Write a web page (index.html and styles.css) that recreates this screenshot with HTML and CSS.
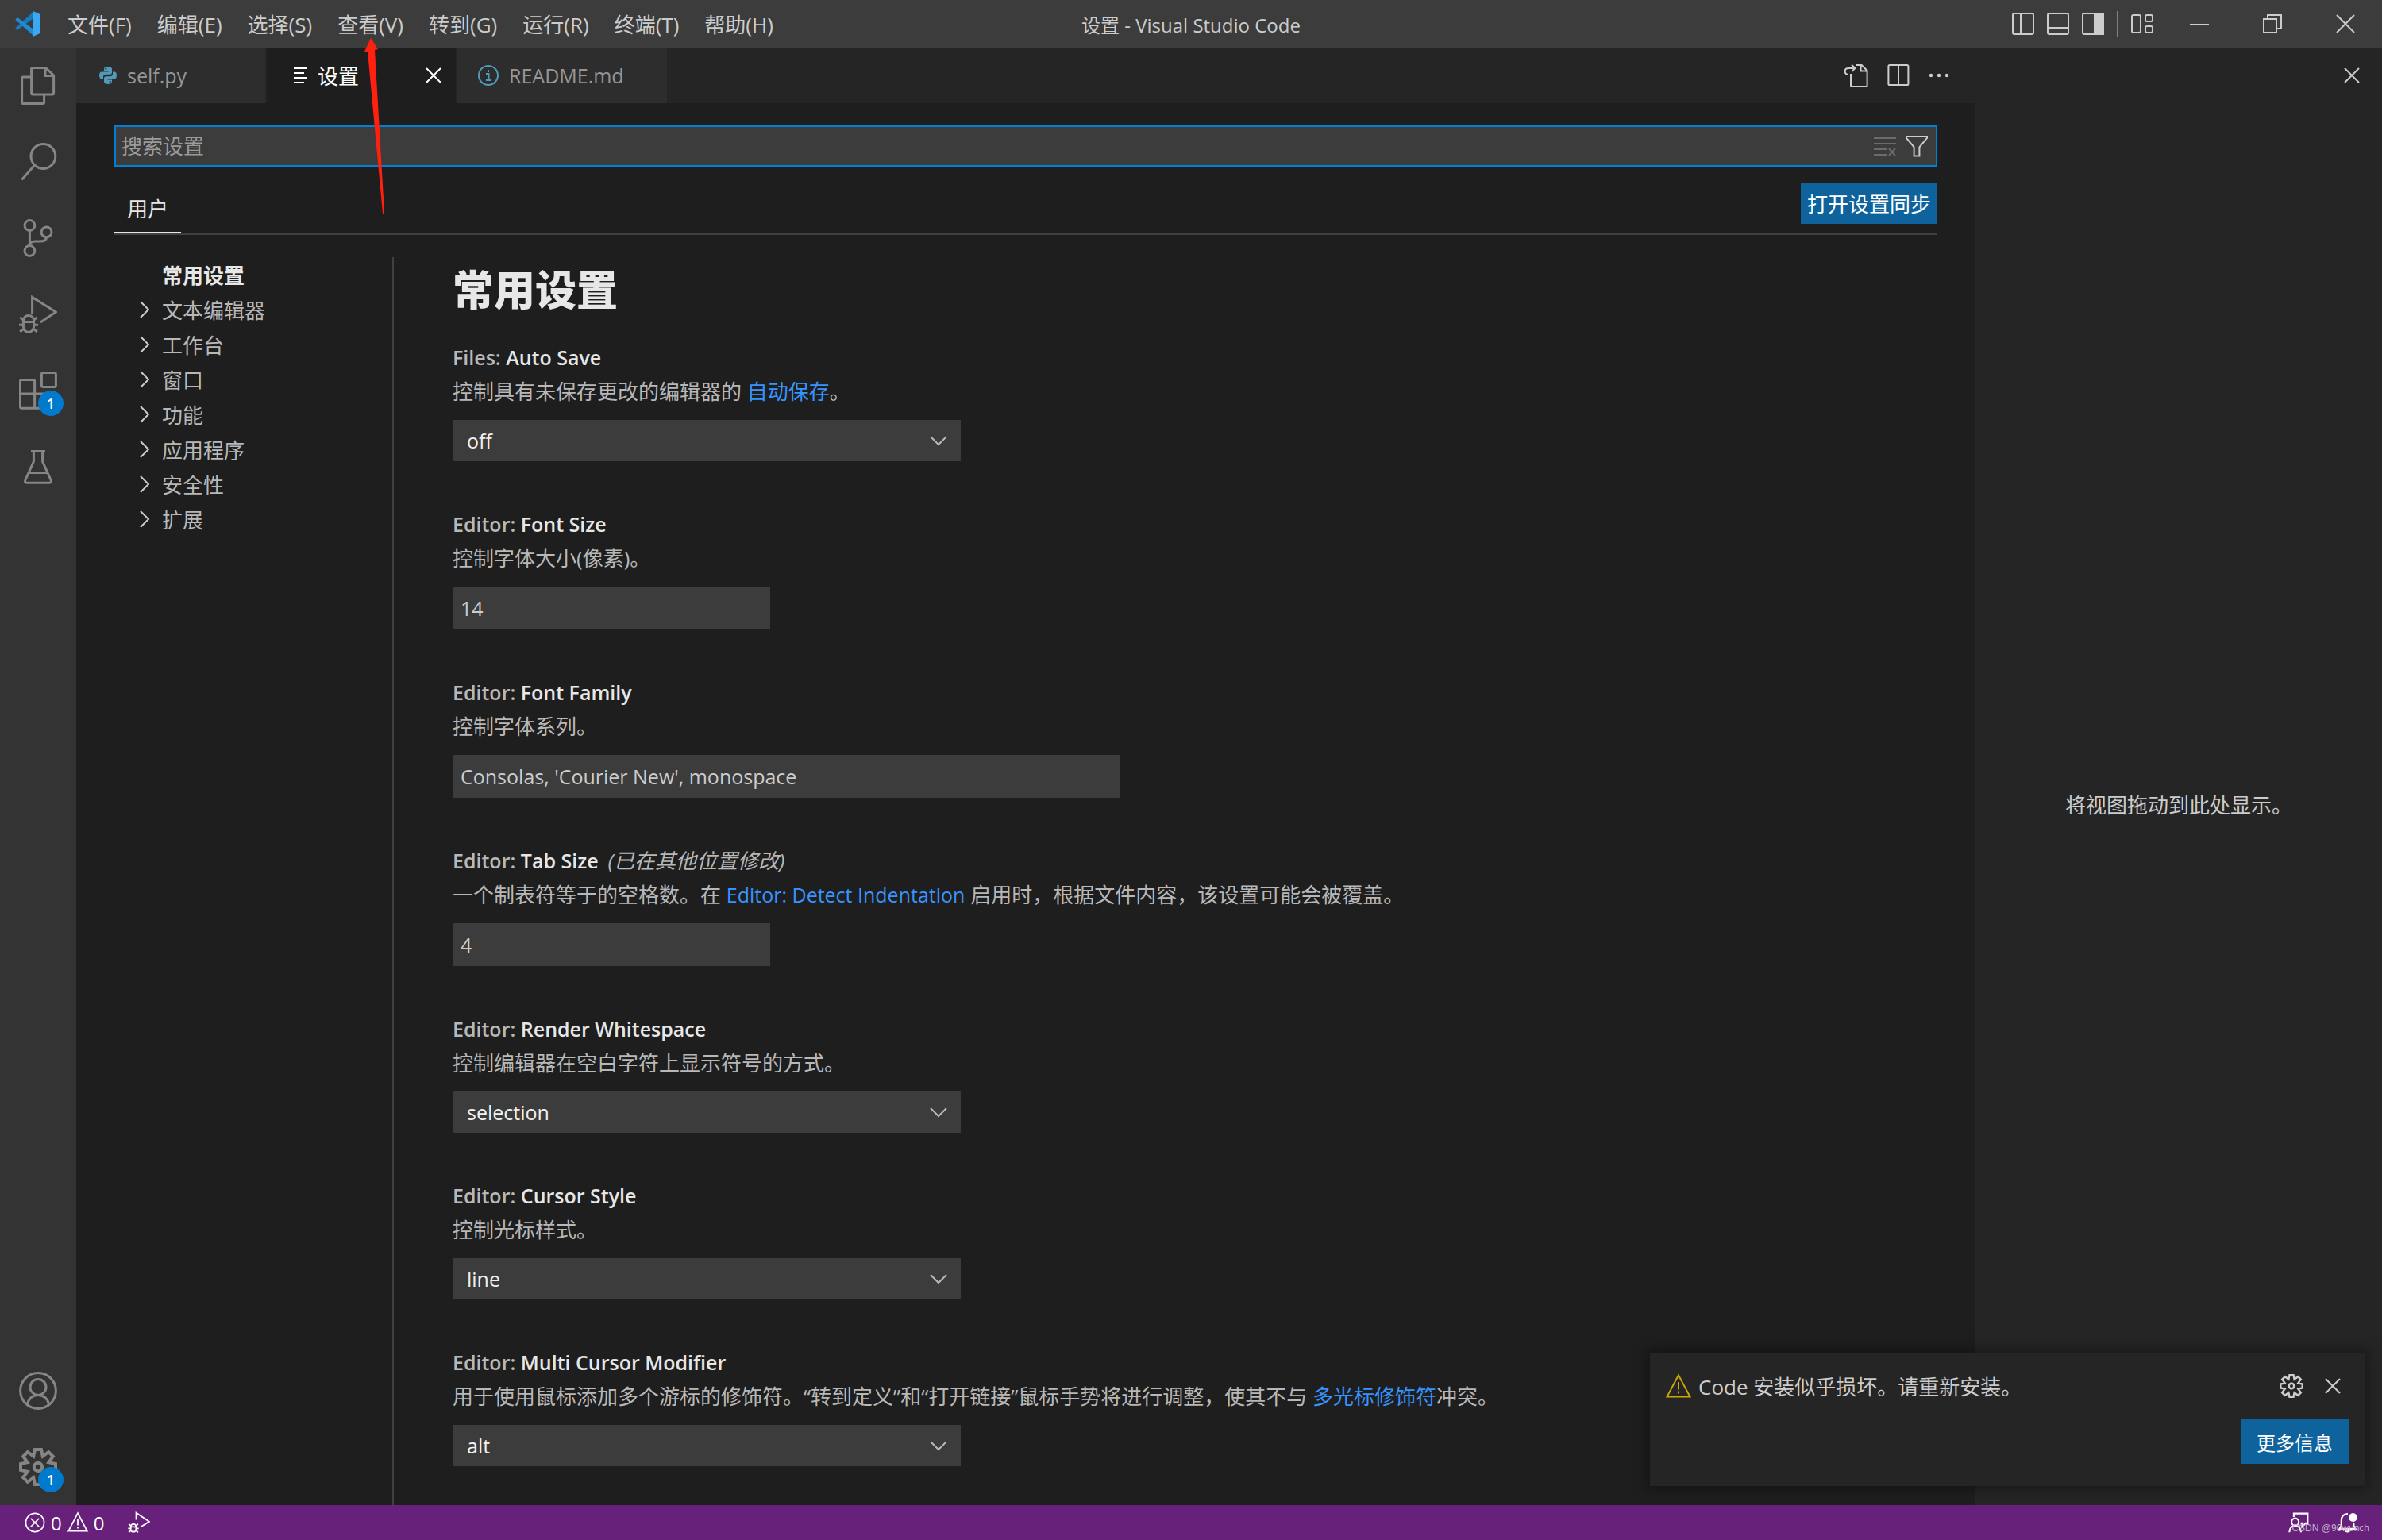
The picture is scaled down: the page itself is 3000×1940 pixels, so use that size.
FILE: index.html
```html
<!DOCTYPE html>
<html lang="zh-CN">
<head>
<meta charset="UTF-8">
<meta name="viewport" content="width=device-width, initial-scale=1.0">
<title>设置 - Visual Studio Code</title>
<link rel="stylesheet" href="styles.css">
</head>
<body>

<!-- Title bar -->
<header class="titlebar">
  <nav class="menu">
    <svg class="logo" viewBox="0 0 32 32">
      <path d="M23.5.3L.3 21.3l2.6 2.6L24 8.500z" fill="#1a78bd"/>
      <path d="M.3 10.700l2.600-2.600L24 23.500v8.200z" fill="#1f8ad6"/>
      <path d="M23 .3l9 4v23.500l-9 4z" fill="#3aa8f2"/>
    </svg>
    <button>文件(F)</button>
    <button>编辑(E)</button>
    <button>选择(S)</button>
    <button>查看(V)</button>
    <button>转到(G)</button>
    <button>运行(R)</button>
    <button>终端(T)</button>
    <button>帮助(H)</button>
  </nav>
  <div class="window-title">设置 - Visual Studio Code</div>
  <div class="window-tools">
    <button class="layout-btn" aria-label="切换主侧栏"><svg viewBox="0 0 16 16"><rect x="1.5" y="1.5" width="13" height="13" rx="1"/><path d="M6.5 1.5v13"/></svg></button>
    <button class="layout-btn" aria-label="切换面板"><svg viewBox="0 0 16 16"><rect x="1.5" y="1.5" width="13" height="13" rx="1"/><path d="M1.5 10.5h13"/></svg></button>
    <button class="layout-btn" aria-label="切换辅助侧栏"><svg viewBox="0 0 16 16"><rect x="1.5" y="1.5" width="13" height="13" rx="1"/><path class="solid" d="M9 1.5h5.5v13H9z"/></svg></button>
    <span class="divider"></span>
    <button class="layout-btn" aria-label="自定义布局"><svg viewBox="0 0 16 16"><rect x="1.5" y="2.5" width="5.5" height="11" rx="1"/><rect x="10" y="2.5" width="4.5" height="4" rx="1"/><rect x="10" y="9.5" width="4.5" height="4" rx="1"/></svg></button>
    <div class="window-controls">
      <button aria-label="最小化"><svg viewBox="0 0 16 16"><path d="M2 8.5h12"/></svg></button>
      <button aria-label="还原"><svg viewBox="0 0 16 16"><path d="M2.500 5h8v8.500h-8zM5 5V2.500h8.500V11H11"/></svg></button>
      <button aria-label="关闭"><svg viewBox="0 0 16 16"><path d="M2.500 2.500l11 11M13.500 2.500l-11 11"/></svg></button>
    </div>
  </div>
</header>

<div class="workbench">
  <!-- Activity bar -->
  <aside class="activitybar">
    <button aria-label="资源管理器"><svg viewBox="0 0 24 24"><path d="M8.500.7h8.200L21.800 5.500v11.300c0 .4-.3.700-.7.700H8.500c-.4 0-.7-.3-.7-.7V1.400c0-.4.3-.7.7-.7zM16.500.7v5h5.300M7.800 6.500H2.500c-.4 0-.7.3-.7.7v15.300c0 .4.300.7.700.7h12.600c.4 0 .7-.3.700-.7v-5"/></svg></button>
    <button aria-label="搜索"><svg viewBox="0 0 24 24"><circle cx="15.200" cy="8.500" r="7.700"/><path d="M9.800 14L1.700 23.200"/></svg></button>
    <button aria-label="源代码管理"><svg viewBox="0 0 24 24"><circle cx="6.700" cy="4" r="3.200"/><circle cx="17.300" cy="8.200" r="3.200"/><circle cx="6.700" cy="20" r="3.200"/><path d="M6.700 7.200v9.600c0-1.800 1.300-2.800 3.300-2.800h3c2.600 0 4.200-.8 4.300-2.600"/></svg></button>
    <button aria-label="运行和调试"><svg viewBox="0 0 24 24"><path d="M8.300 11.500V1.200L23.200 10.500l-9.700 6.500"/><path d="M2.700 16c0-2 1.300-3.300 3.300-3.300s3.300 1.300 3.300 3.300v3.500c0 2-1.300 3.700-3.300 3.700s-3.300-1.700-3.300-3.700zM2.700 16.700h6.600M2.700 15.500L.6 13.800M9.300 15.500l2.100-1.700M2.700 18.600H0M9.300 18.600H12M2.900 21L.6 23M9.100 21l2.300 2"/></svg></button>
    <button aria-label="扩展"><svg viewBox="0 0 24 24"><rect x="14.200" y=".7" width="9" height="9" rx="1"/><path d="M9.800 14V6.200c0-.5-.4-.9-.9-.9H1.600c-.5 0-.9.4-.9.900v16c0 .5.400.9.900.9h16.300c.5 0 .9-.4.900-.9v-7.300c0-.5-.4-.9-.9-.9zM.7 14h9.100v9.200"/></svg><span class="badge">1</span></button>
    <button aria-label="测试"><svg viewBox="0 0 24 24"><path d="M7.500 2.200h9M9.200 2.200v6.500L3.900 20.500c-.4.900 0 1.600.9 1.600h14.400c.9 0 1.300-.7.900-1.600L14.800 8.700V2.200M6.200 15.700h11.600"/></svg></button>
    <span class="spacer"></span>
    <button aria-label="帐户"><svg viewBox="0 0 24 24"><circle cx="12" cy="12" r="11.200"/><circle cx="12" cy="9.700" r="5"/><path d="M5.200 20.700c.6-3.600 3.300-6 6.800-6s6.200 2.400 6.800 6"/></svg></button>
    <button aria-label="管理"><svg class="gear" viewBox="0 0 24 24"><path d="M10 1h4l.9 4.300 3.700-2.700 2.800 2.800-2.700 3.700L23 10v4l-4.300.9 2.700 3.700-2.800 2.800-3.700-2.700L14 23h-4l-.9-4.300-3.700 2.700-2.800-2.800 2.700-3.700L1 14v-4l4.300-.9-2.700-3.700 2.800-2.800 3.700 2.700z"/><circle cx="12" cy="12" r="2.600"/></svg><span class="badge">1</span></button>
  </aside>

  <!-- Editor group -->
  <main class="editor">
    <div class="tabs">
      <div class="tab tab-file">
        <svg class="python" viewBox="0 0 24 24"><path d="M11.800 1C8.700 1 7 2 7 4v2.500h5.500v1H4.300C2 7.500 1 9.300 1 12s1 4.500 3 4.500h2V14c0-2 1.400-3.200 3.200-3.200h5.300c1.500 0 2.500-1.100 2.500-2.600V4c0-2-2-3-5.200-3zM9.300 2.700a1.100 1.100 0 1 1 0 2.200 1.100 1.100 0 0 1 0-2.200z"/><path d="M12.200 23c3.100 0 4.800-1 4.800-3v-2.500h-5.500v-1h8.200c2.300 0 3.300-1.800 3.300-4.500s-1-4.500-3-4.500h-2V10c0 2-1.400 3.200-3.200 3.200H9.500C8 13.200 7 14.300 7 15.800V20c0 2 2 3 5.200 3zm2.500-1.700a1.100 1.100 0 1 1 0-2.200 1.100 1.100 0 0 1 0 2.200z"/></svg>
        <span>self.py</span>
      </div>
      <div class="tab tab-settings active">
        <svg viewBox="0 0 16 16"><path d="M3 3.500H11.500M3 6.500H9.500M3 9.500H11.500M3 12.500H9.500"/></svg>
        <span>设置</span>
        <button aria-label="关闭"><svg viewBox="0 0 16 16"><path d="M3.500 3.500l9 9M12.500 3.500l-9 9"/></svg></button>
      </div>
      <div class="tab tab-readme">
        <svg class="info" viewBox="0 0 28 28"><circle cx="14" cy="14" r="12"/><path d="M11 12h3.500v7.500M11 20h6.500M14 7v3"/></svg>
        <span>README.md</span>
      </div>
      <div class="editor-actions">
        <button aria-label="打开设置(json)"><svg viewBox="0 0 16 16"><path d="M4.500 7v7.500c0 .3.200.5.500.5h9.300c.3 0 .5-.2.500-.5V5L11.300 1.500H7.500M10.800 1.500V5.300h4M2.500 7.500C.2 6.800.2 3.500 3 3.500h4M5 1.300l2.200 2.200L5 5.700"/></svg></button>
        <button aria-label="拆分编辑器"><svg viewBox="0 0 16 16"><rect x="2.200" y="1.500" width="12.500" height="12.500" rx=".8"/><path d="M8.500 1.500V14"/></svg></button>
        <button aria-label="更多操作"><svg viewBox="0 0 16 16"><g class="solid"><circle cx="3" cy="8" r=".6"/><circle cx="8" cy="8" r=".6"/><circle cx="13" cy="8" r=".6"/></g></svg></button>
      </div>
    </div>

    <div class="settings">
      <div class="search">
        <input type="text" aria-label="搜索设置" placeholder="搜索设置">
        <button class="clear" aria-label="清除搜索"><svg viewBox="0 0 16 16"><path d="M1 3h14M1 6.500h14M1 10h8M1 13.500h8M10.500 9.500l4 4.500M14.500 9.500l-4 4.500"/></svg></button>
        <button aria-label="筛选设置"><svg viewBox="0 0 16 16"><path d="M1.500 2h13v1L9.700 8.700v5.500H6.300V8.700L1.500 3z"/></svg></button>
      </div>
      <div class="scope">
        <button class="scope-tab">用户</button>
        <button class="primary sync">打开设置同步</button>
      </div>

      <div class="settings-body">
        <ul class="toc">
          <li class="selected"><a href="#common">常用设置</a></li>
          <li><svg viewBox="0 0 16 16"><path d="M5.500 3l5 5-5 5"/></svg><a href="#text-editor">文本编辑器</a></li>
          <li><svg viewBox="0 0 16 16"><path d="M5.500 3l5 5-5 5"/></svg><a href="#workbench">工作台</a></li>
          <li><svg viewBox="0 0 16 16"><path d="M5.500 3l5 5-5 5"/></svg><a href="#window">窗口</a></li>
          <li><svg viewBox="0 0 16 16"><path d="M5.500 3l5 5-5 5"/></svg><a href="#features">功能</a></li>
          <li><svg viewBox="0 0 16 16"><path d="M5.500 3l5 5-5 5"/></svg><a href="#application">应用程序</a></li>
          <li><svg viewBox="0 0 16 16"><path d="M5.500 3l5 5-5 5"/></svg><a href="#security">安全性</a></li>
          <li><svg viewBox="0 0 16 16"><path d="M5.500 3l5 5-5 5"/></svg><a href="#extensions">扩展</a></li>
        </ul>

        <section class="list" id="common">
          <h1>常用设置</h1>
          <div class="item">
            <label for="autosave">Files: <b>Auto Save</b></label>
            <p>控制具有未保存更改的编辑器的 <a href="#autosave">自动保存</a>。</p>
            <div class="select"><select id="autosave"><option>off</option></select><svg viewBox="0 0 16 16"><path d="M3 5.500l5 5 5-5"/></svg></div>
          </div>
          <div class="item">
            <label for="fontsize">Editor: <b>Font Size</b></label>
            <p>控制字体大小(像素)。</p>
            <input id="fontsize" type="text" value="14">
          </div>
          <div class="item">
            <label for="fontfamily">Editor: <b>Font Family</b></label>
            <p>控制字体系列。</p>
            <input id="fontfamily" class="wide" type="text" value="Consolas, 'Courier New', monospace">
          </div>
          <div class="item">
            <label for="tabsize">Editor: <b>Tab Size</b><i>(已在其他位置修改)</i></label>
            <p>一个制表符等于的空格数。在 <a class="latin" href="#indent">Editor: Detect Indentation</a> 启用时，根据文件内容，该设置可能会被覆盖。</p>
            <input id="tabsize" type="text" value="4">
          </div>
          <div class="item">
            <label for="whitespace">Editor: <b>Render Whitespace</b></label>
            <p>控制编辑器在空白字符上显示符号的方式。</p>
            <div class="select"><select id="whitespace"><option>selection</option></select><svg viewBox="0 0 16 16"><path d="M3 5.500l5 5 5-5"/></svg></div>
          </div>
          <div class="item">
            <label for="cursor">Editor: <b>Cursor Style</b></label>
            <p>控制光标样式。</p>
            <div class="select"><select id="cursor"><option>line</option></select><svg viewBox="0 0 16 16"><path d="M3 5.500l5 5 5-5"/></svg></div>
          </div>
          <div class="item">
            <label for="multicursor">Editor: <b>Multi Cursor Modifier</b></label>
            <p>用于使用鼠标添加多个游标的修饰符。“转到定义”和“打开链接”鼠标手势将进行调整，使其不与 <a href="#multicursor">多光标修饰符</a>冲突。</p>
            <div class="select"><select id="multicursor"><option>alt</option></select><svg viewBox="0 0 16 16"><path d="M3 5.500l5 5 5-5"/></svg></div>
          </div>
        </section>
      </div>
    </div>
  </main>

  <!-- Secondary side bar -->
  <aside class="auxbar">
    <div class="aux-title"><button aria-label="关闭"><svg viewBox="0 0 16 16"><path d="M3.500 3.500l9 9M12.500 3.500l-9 9"/></svg></button></div>
    <div class="aux-body">将视图拖动到此处显示。</div>
  </aside>
</div>

<!-- Status bar -->
<footer class="statusbar">
  <button class="problems" aria-label="问题">
    <svg viewBox="0 0 16 16"><circle cx="8" cy="8" r="6.600"/><path d="M5 5l6 6M11 5l-6 6"/></svg><span>0</span>
    <svg viewBox="0 0 16 16"><path d="M8 1.200L14.700 14H1.300zM8 5.500v4.500M8 11v1.300"/></svg><span>0</span>
  </button>
  <button class="debug" aria-label="调试"><svg viewBox="0 0 24 24"><path d="M9 9V1.500L23 11l-9.500 6"/><path d="M3.200 16.500c0-1.600 1-2.800 2.800-2.800s2.800 1.200 2.800 2.800v2.700c0 1.600-1 2.800-2.800 2.800s-2.800-1.200-2.800-2.800zM3.200 16.500h5.600M3.200 15.500L1 13.500M8.800 15.500l2.200-2M3.200 18.300H.3M8.800 18.300h2.900M3.200 20.500L1 22.500M8.800 20.500l2.200 2"/></svg></button>
  <span class="spacer"></span>
  <button class="status-icon" aria-label="反馈"><svg viewBox="0 0 16 16"><path d="M4.500 4V1.500H14.500V8.500H13L10.500 11V8.500H9.500"/><circle cx="5.500" cy="7.500" r="2.600"/><path d="M1.300 15c.3-3 1.700-4.900 4.200-4.900s3.900 1.900 4.200 4.900"/></svg></button>
  <button class="status-icon" aria-label="通知"><svg viewBox="0 0 16 16"><path d="M8 1.700C5 1.500 3.300 3.700 3.300 6.500V10L2 12.500h11.500L12.200 10V8M6.300 12.500c0 2.700 3 2.700 3 0"/><circle class="solid" cx="11.700" cy="4.300" r="2.500"/></svg></button>
  <span class="watermark">CSDN @90wunch</span>
</footer>

<!-- Notification toast -->
<div class="toast" role="alert">
  <div class="toast-row">
    <svg class="warning" viewBox="0 0 16 16"><path d="M8 1.200L15.200 14.700H.8zM8 5.500v4.700M8 11.200v1.500"/></svg>
    <span class="toast-text">Code 安装似乎损坏。请重新安装。</span>
    <button class="configure" aria-label="设置"><svg class="gear" viewBox="0 0 24 24"><path d="M10 1h4l.9 4.300 3.700-2.700 2.800 2.800-2.700 3.700L23 10v4l-4.300.9 2.700 3.700-2.800 2.800-3.700-2.700L14 23h-4l-.9-4.300-3.700 2.700-2.800-2.800 2.700-3.700L1 14v-4l4.300-.9-2.700-3.700 2.800-2.800 3.700 2.700z"/><circle cx="12" cy="12" r="2.600"/></svg></button>
    <button aria-label="关闭"><svg viewBox="0 0 16 16"><path d="M3.500 3.500l9 9M12.500 3.500l-9 9"/></svg></button>
  </div>
  <button class="primary more">更多信息</button>
</div>

<!-- Arrow pointing at the view menu -->
<svg class="arrow" viewBox="0 0 30 224"><path d="M9 0l9 14-4 1 12 204 0 4-2-2L5 17l-4 0z"/></svg>

</body>
</html>
```
FILE: styles.css
```css
* {
  box-sizing: border-box;
}
html, body {
  height: 100%;
  margin: 0;
}
body {
  position: relative;
  display: flex;
  flex-direction: column;
  overflow: hidden;
  background: #1e1e1e;
  color: #cccccc;
  font-family: "Open Sans", "Noto Sans CJK SC", sans-serif;
  font-size: 26px;
}
button {
  display: flex;
  align-items: center;
  justify-content: center;
  padding: 0;
  border: 0;
  background: none;
  color: inherit;
  font: inherit;
}
svg {
  flex: none;
  width: 32px;
  height: 32px;
  fill: none;
  stroke: currentColor;
}
.solid {
  fill: currentColor;
}
.spacer {
  flex: 1;
}

/* Title bar */
.titlebar {
  display: grid;
  grid-template-columns: 1fr auto 1fr;
  align-items: center;
  flex: none;
  height: 60px;
  background: #3c3c3c;
}
.menu {
  display: flex;
  align-items: center;
}
.menu button {
  height: 60px;
  padding: 0 16px;
}
.logo {
  margin: 0 18px 0 19px;
  stroke: none;
}
.window-title {
  font-size: 24px;
}
.window-tools {
  display: flex;
  align-items: center;
  justify-content: flex-end;
}
.layout-btn {
  width: 44px;
  height: 44px;
}
.divider {
  width: 2px;
  height: 32px;
  margin: 0 8px;
  background: #808080;
}
.window-controls {
  display: flex;
  margin-left: 4px;
}
.window-controls button {
  width: 92px;
  height: 60px;
}

/* Activity bar */
.workbench {
  display: flex;
  flex: 1;
  min-height: 0;
}
.activitybar {
  display: flex;
  flex-direction: column;
  flex: none;
  width: 96px;
  background: #333333;
  color: #858585;
}
.activitybar button {
  position: relative;
  height: 96px;
}
.activitybar svg {
  width: 48px;
  height: 48px;
  stroke-width: 1.5;
}
.activitybar .gear {
  stroke-width: 2;
}
.badge {
  position: absolute;
  left: 48px;
  top: 48px;
  width: 32px;
  height: 32px;
  border-radius: 50%;
  background: #007acc;
  color: #ffffff;
  font-size: 18px;
  font-weight: 600;
  line-height: 32px;
  text-align: center;
}

/* Editor */
.editor {
  display: flex;
  flex-direction: column;
  flex: 1;
  min-width: 0;
}
.tabs {
  display: flex;
  flex: none;
  height: 70px;
  background: #252526;
}
.tab {
  display: flex;
  align-items: center;
  border-right: 2px solid #252526;
  background: #2d2d2d;
  color: #969696;
  font-size: 25px;
}
.tab-file, .tab-settings {
  width: 240px;
}
.tab-file {
  gap: 12px;
  padding-left: 28px;
}
.tab-settings {
  gap: 4px;
  padding-left: 28px;
  font-size: 26px;
}
.tab-settings button {
  margin: 0 12px 0 auto;
}
.tab-readme {
  width: 266px;
  gap: 12px;
  padding-left: 25px;
}
.tab.active {
  background: #1e1e1e;
  color: #ffffff;
}
.python {
  width: 24px;
  height: 24px;
  fill: #519aba;
  stroke: none;
}
.info {
  width: 28px;
  height: 28px;
  stroke: #519aba;
  stroke-width: 2;
}
.editor-actions {
  display: flex;
  align-items: center;
  margin-left: auto;
  padding-right: 20px;
}
.editor-actions button {
  width: 52px;
  height: 52px;
}

/* Settings */
.settings {
  display: flex;
  flex-direction: column;
  flex: 1;
  min-height: 0;
  padding: 28px 48px 0;
}
.search {
  display: flex;
  align-items: center;
  flex: none;
  height: 52px;
  padding-right: 4px;
  border: 2px solid #007fd4;
  background: #3c3c3c;
}
.search input {
  flex: 1;
  padding: 0 7px;
  border: 0;
  outline: 0;
  background: none;
  color: #cccccc;
  font: inherit;
}
.search input::placeholder {
  color: #9b9b9b;
}
.search button {
  width: 40px;
}
.search .clear {
  color: #6b6b6b;
}
.scope {
  display: flex;
  align-items: flex-end;
  justify-content: space-between;
  flex: none;
  height: 86px;
  border-bottom: 2px solid #404040;
}
.scope-tab {
  height: 62px;
  padding: 0 16px;
  border-bottom: 2px solid #e7e7e7;
  color: #e7e7e7;
}
.primary {
  background: #0e639c;
  color: #ffffff;
}
.sync {
  height: 52px;
  margin-bottom: 12px;
  padding: 0 8px;
}
.settings-body {
  display: flex;
  flex: 1;
  min-height: 0;
  padding-top: 28px;
}
.toc {
  flex: none;
  width: 352px;
  margin: 0;
  padding: 0;
  border-right: 2px solid #404040;
  list-style: none;
}
.toc li {
  display: flex;
  align-items: center;
  height: 44px;
  padding-left: 22px;
}
.toc svg {
  margin-right: 6px;
}
.toc a {
  color: #b8b8b8;
  text-decoration: none;
}
.toc .selected {
  padding-left: 60px;
}
.toc .selected a {
  color: #e7e7e7;
  font-weight: bold;
}
.list {
  flex: 1;
  min-width: 0;
  overflow: hidden;
  padding-left: 74px;
}
.list h1 {
  margin: 0 0 22px;
  color: #e7e7e7;
  font-size: 52px;
  font-weight: 900;
  line-height: 82px;
}
.item {
  margin-bottom: 58px;
  color: #b8b8b8;
}
.item label {
  display: block;
  font-size: 25px;
  font-weight: 600;
  line-height: 44px;
}
.item b {
  color: #e7e7e7;
  font-weight: 600;
}
.item i {
  margin-left: 12px;
  font-size: 26px;
  font-weight: normal;
}
.item p {
  margin: 0 0 15px;
  line-height: 42px;
  white-space: nowrap;
}
.item p a {
  color: #3794ff;
  text-decoration: none;
}
.item .latin {
  font-size: 25px;
}
.item input {
  display: block;
  width: 400px;
  height: 54px;
  padding: 0 10px;
  border: 0;
  background: #3c3c3c;
  color: #cccccc;
  font: inherit;
  font-size: 25px;
}
.item .wide {
  width: 840px;
}
.select {
  position: relative;
  width: 640px;
}
.select select {
  display: block;
  width: 100%;
  height: 52px;
  padding: 0 18px;
  border: 0;
  border-radius: 0;
  appearance: none;
  background: #3c3c3c;
  color: #f0f0f0;
  font: inherit;
  font-size: 25px;
}
.item {
  margin-bottom: 57px;
}
.select svg {
  position: absolute;
  top: 10px;
  right: 12px;
  pointer-events: none;
}

/* Secondary side bar */
.auxbar {
  display: flex;
  flex-direction: column;
  flex: none;
  width: 512px;
  background: #252526;
}
.aux-title {
  display: flex;
  align-items: center;
  justify-content: flex-end;
  height: 70px;
  padding-right: 22px;
}
.aux-body {
  display: flex;
  align-items: center;
  justify-content: center;
  flex: 1;
}

/* Status bar */
.statusbar {
  position: relative;
  display: flex;
  align-items: center;
  flex: none;
  height: 44px;
  padding: 0 12px 0 30px;
  background: #68217a;
  color: #ffffff;
  font-size: 24px;
}
.statusbar svg {
  width: 28px;
  height: 28px;
}
.problems {
  gap: 6px;
}
.debug {
  margin-left: 30px;
}
.debug svg {
  stroke-width: 1.5;
}
.status-icon {
  width: 62px;
}
.status-icon svg {
  stroke-width: 1.2;
}
.watermark {
  position: absolute;
  right: 16px;
  bottom: 8px;
  color: #c3b3c9;
  font-family: "Liberation Sans", sans-serif;
  font-size: 12px;
}

/* Notification toast */
.toast {
  position: absolute;
  right: 22px;
  bottom: 68px;
  width: 900px;
  padding: 20px 20px 28px;
  background: #252526;
  box-shadow: 0 0 16px 4px rgba(0, 0, 0, 0.36);
}
.toast-row {
  display: flex;
  align-items: center;
  height: 44px;
  margin-bottom: 20px;
}
.toast-text {
  flex: 1;
  margin-left: 9px;
}
.toast-row button {
  width: 40px;
}
.toast-row .configure {
  margin-right: 12px;
}
.configure .gear {
  width: 30px;
  height: 30px;
  stroke-width: 2;
}
.warning {
  color: #cca700;
}
.more {
  height: 56px;
  margin-left: auto;
  padding: 0 20px;
  font-size: 24px;
}

/* Arrow over the editor */
.arrow {
  position: absolute;
  left: 458px;
  top: 48px;
  width: 30px;
  height: 224px;
  fill: #ff2010;
  stroke: none;
}
```
